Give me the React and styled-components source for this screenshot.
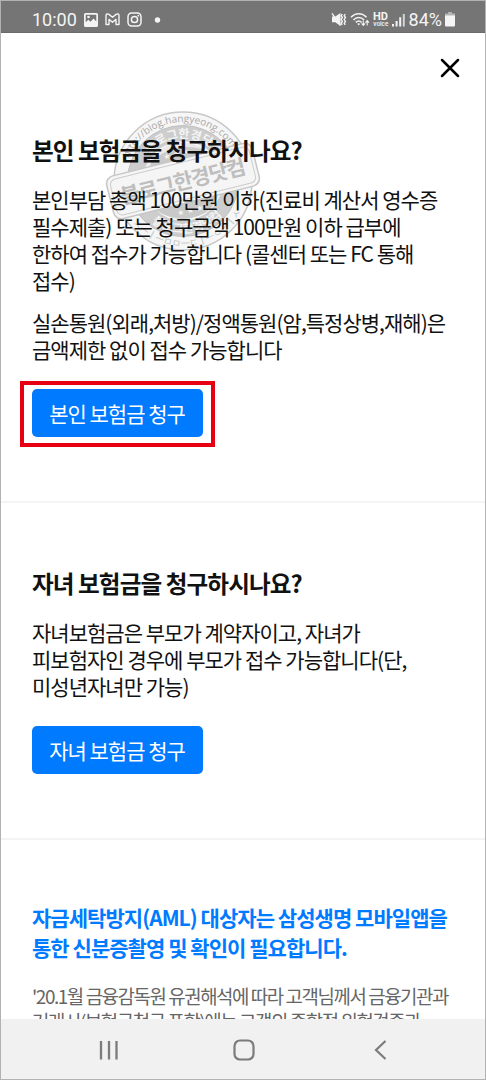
import React from 'react';
import styled, { createGlobalStyle } from 'styled-components';

const GlobalStyle = createGlobalStyle`
  * {
    box-sizing: border-box;
  }
  body {
    margin: 0;
    background: #fff;
  }
`;

const Phone = styled.div`
  position: relative;
  display: flex;
  flex-direction: column;
  width: 486px;
  height: 1080px;
  border: 1px solid #b2b2b2;
  background: #fff;
  overflow: hidden;
  color: #111;
  font-family: 'Noto Sans CJK KR', 'Noto Sans', sans-serif;
`;

const StatusBar = styled.header`
  display: flex;
  flex: none;
  align-items: center;
  justify-content: space-between;
  height: 32px;
  padding: 6px 30px 0 31px;
  background: #757575;
  border-bottom: 1px solid #6a6a6a;
  color: #f4f4f4;
`;

const StatusGroup = styled.div`
  display: flex;
  align-items: center;
  gap: ${(props) => props.gap}px;
`;

const StatusText = styled.span`
  font-family: Roboto, sans-serif;
  font-size: 18px;
  line-height: 22px;
`;

const Content = styled.main`
  position: relative;
  flex: 1;
  min-height: 0;
  overflow: hidden;
`;

const CloseRow = styled.div`
  display: flex;
  justify-content: flex-end;
  height: 37px;
  padding: 17px 17px 0 0;
`;

const CloseButton = styled.button`
  display: flex;
  width: 36px;
  height: 36px;
  padding: 8px;
  border: 0;
  background: none;
  color: #000;
`;

const Section = styled.section`
  position: relative;
  height: ${(props) => props.h};
  padding: 62px 20px 0 31px;
  border-bottom: ${(props) => (props.last ? 'none' : '2px solid #f4f4f4')};
`;

const Title = styled.h2`
  position: relative;
  margin: 0 0 18.4px;
  font-size: 23.6px;
  font-weight: 700;
  line-height: 36px;
  letter-spacing: -0.9px;
  white-space: nowrap;
`;

const Text = styled.p`
  position: relative;
  margin: 0 0 16px;
  font-size: 21px;
  line-height: 26.7px;
  letter-spacing: -0.98px;
  white-space: nowrap;
`;

const ClaimButton = styled.button`
  position: relative;
  display: block;
  width: 171px;
  height: 48px;
  margin-top: 26.6px;
  padding: 0 1px 0 0;
  border: 0;
  border-radius: 5px;
  background: #007aff;
  color: #fff;
  font-family: inherit;
  font-size: 21px;
  line-height: 46px;
  letter-spacing: -1px;
`;

const Highlight = styled.div`
  position: absolute;
  top: 311px;
  left: 19px;
  width: 195px;
  height: 66px;
  border: 4px solid #e60012;
`;

const NoticeTitle = styled.h3`
  margin: 1px 0 22px;
  color: #007aff;
  font-size: 21px;
  font-weight: 700;
  line-height: 29.4px;
  letter-spacing: -0.96px;
  white-space: nowrap;
`;

const NoticeText = styled.p`
  margin: 0;
  color: #666;
  font-size: 18.9px;
  line-height: 24.5px;
  letter-spacing: -1.42px;
  white-space: nowrap;
`;

const StampSvg = styled.svg`
  position: absolute;
  top: 35px;
  left: 99px;
  pointer-events: none;
`;

const NavBar = styled.nav`
  display: flex;
  flex: none;
  align-items: center;
  justify-content: space-between;
  height: 60px;
  padding: 2px 95px 0 96px;
  background: #f1f1f1;
`;

const PictureIcon = () => (
  <svg width="14" height="14" viewBox="0 0 14 14">
    <path
      fill="currentColor"
      fillRule="evenodd"
      d="M1.5 0h11A1.5 1.5 0 0 1 14 1.500v11a1.500 1.500 0 0 1-1.500 1.500h-11A1.500 1.500 0 0 1 0 12.500v-11A1.500 1.500 0 0 1 1.500 0zM1.700 1.700v7.600l2.600-2.600 2.200 2 3-3.200 2.800 3V1.700z"
    />
    <circle cx="4.500" cy="4" r="1.300" fill="currentColor" />
  </svg>
);

const MailIcon = () => (
  <svg width="15" height="13" viewBox="0 0 15 13" fill="none" stroke="currentColor" strokeWidth="1.4" strokeLinejoin="round">
    <path d="M1 11.500V2.600C1 .8 2.700.5 3.900 1.400l3.600 2.900 3.600-2.900C12.300.5 14 .8 14 2.600v8.900h-3V6.400L7.500 9.200 4 6.400v5.100z" />
  </svg>
);

const CameraIcon = () => (
  <svg width="15" height="15" viewBox="0 0 15 15" fill="none" stroke="currentColor" strokeWidth="1.5">
    <rect x="1" y="1" width="13" height="13" rx="3.700" />
    <circle cx="7.500" cy="7.500" r="3.100" />
    <circle cx="11.300" cy="3.700" r="0.9" fill="currentColor" stroke="none" />
  </svg>
);

const MuteIcon = () => (
  <svg width="16" height="15" viewBox="0 0 16 15" fill="none" stroke="currentColor">
    <path fill="currentColor" stroke="none" d="M1 4.500h3.300L9.500 1v13l-5.200-3.800H1z" />
    <path strokeWidth="1.4" d="M1 1.300l8.500 12" />
    <path strokeWidth="1.4" d="M11.200 2l-1 1.700 1.200 1.800-1.200 2 1.200 1.900-1.200 1.800 1 1.700M14.200 2l-1 1.700 1.200 1.800-1.200 2 1.200 1.900-1.200 1.800 1 1.700" />
  </svg>
);

const WifiIcon = () => (
  <svg width="20" height="15" viewBox="0 0 20 15" fill="none" stroke="currentColor" strokeWidth="1.5">
    <path d="M1 5.300c4.200-4.800 11.300-4.800 15.500 0M3.400 7.900c3-3.200 7.700-3.200 10.700 0M5.800 10.400c1.800-1.700 4-1.700 5.800 0" />
    <path fill="currentColor" stroke="none" d="M7.200 11.800c1-.8 2-.8 3 0L8.700 13.500z" />
    <path strokeWidth="1.1" d="M13.300 8.500v4.700m-1.800-1.800 1.800 2 1.800-2M17.200 13.500V8.800m-1.800 1.800 1.800-2 1.800 2" />
  </svg>
);

const HdVoiceIcon = () => (
  <svg width="16" height="15" viewBox="0 0 16 15" fill="currentColor" fontFamily="Roboto, sans-serif" fontWeight="700" overflow="visible">
    <text x="0" y="8" fontSize="10.500" textLength="15" lengthAdjust="spacingAndGlyphs">HD</text>
    <text x="0.300" y="13.500" fontSize="6.500" fontWeight="500" textLength="15" lengthAdjust="spacingAndGlyphs">voice</text>
  </svg>
);

const SignalIcon = () => (
  <svg width="14" height="14" viewBox="0 0 14 14" fill="currentColor">
    <path d="M0 11h2v2.500H0zM3.600 8h2v5.500h-2zM7.200 4.300h2v9.200h-2z" />
    <path d="M10.800 1h2v12.500h-2z" opacity="0.75" />
  </svg>
);

const BatteryIcon = () => (
  <svg width="10" height="15" viewBox="0 0 10 15" fill="currentColor">
    <path opacity="0.5" d="M3 0h4v1.500H10V4H0V1.500h3z" />
    <path d="M0 3.500h10v10a1 1 0 0 1-1 1H1a1 1 0 0 1-1-1z" />
  </svg>
);

// round blog stamp, sits behind the copy
const Stamp = () => (
  <StampSvg width="166" height="152" viewBox="-83 -76 166 152">
    <defs>
      <path id="rimTop" d="M-59 0A59 59 0 0 1 59 0" />
      <path id="rimBottom" d="M-66 0A66 66 0 0 0 66 0" />
      <path id="bandTop" d="M-43 0A43 43 0 0 1 43 0" />
      <path id="bandBottom" d="M-52 0A52 52 0 0 0 52 0" />
    </defs>
    <circle r="69" fill="#f6f6f6" stroke="#c8c8c8" strokeWidth="1.5" />
    <circle r="55.500" fill="#cdcdcd" stroke="#c0c0c0" />
    <circle r="39" fill="#e9e9e9" stroke="#f8f8f8" strokeWidth="1.5" />
    <path d="M-32-20Q0-44 30-27L36-14-34 4zM-36 18 36 2Q37 35 0 38-27 36-36 18z" fill="#c9c9c9" />
    <g transform="rotate(-6)" fontFamily="'Noto Sans CJK KR', sans-serif" textAnchor="middle">
      <text fontSize="10" fill="#a8a8a8" fontFamily="'Open Sans', sans-serif">
        <textPath href="#rimTop" startOffset="50%">http://blog.hangyeong.com</textPath>
      </text>
      <text fontSize="12" fontWeight="700" fill="#f4f4f4">
        <textPath href="#bandTop" startOffset="54%">블로그한경닷컴</textPath>
      </text>
      <text fontSize="12" fontWeight="700" fill="#f4f4f4">
        <textPath href="#bandBottom" startOffset="50%">블로그한경닷컴</textPath>
      </text>
      <text fontSize="10" fill="#c0c0c0">
        <textPath href="#rimBottom" startOffset="50%">ㅅㅡㅣㅡㅁㅁㅡㄷㅣㅡㅇㅡㅣㅅ</textPath>
      </text>
    </g>
    <g transform="rotate(-14)">
      <text y="-25" fontSize="8" fill="#f2f2f2" textAnchor="middle" fontFamily="'DejaVu Sans', sans-serif">★ ★ ★</text>
      <text y="33" fontSize="8" fill="#f2f2f2" textAnchor="middle" fontFamily="'DejaVu Sans', sans-serif">★ ★ ★</text>
      <rect x="-75" y="-22" width="150" height="44" rx="8" fill="#f5f5f5" stroke="#c6c6c6" strokeWidth="1.5" />
      <rect x="-71.500" y="-18.500" width="143" height="37" rx="6" fill="#f5f5f5" stroke="#cdcdcd" />
      <text y="8" fontSize="21" fontWeight="700" fill="#bebebe" textAnchor="middle" textLength="128" fontFamily="'Noto Sans CJK KR', sans-serif">
        블로그한경닷컴
      </text>
    </g>
  </StampSvg>
);

const App = () => {
  return (
    <Phone>
      <GlobalStyle />
      <StatusBar>
        <StatusGroup gap={7}>
          <StatusText>10:00</StatusText>
          <PictureIcon />
          <MailIcon />
          <CameraIcon />
          <svg width="22" height="6" viewBox="0 0 22 6">
            <circle cx="8.500" cy="3" r="2.700" fill="currentColor" />
          </svg>
        </StatusGroup>
        <StatusGroup gap={3}>
          <MuteIcon />
          <WifiIcon />
          <HdVoiceIcon />
          <SignalIcon />
          <StatusText>84%</StatusText>
          <BatteryIcon />
        </StatusGroup>
      </StatusBar>
      <Content>
        <CloseRow>
          <CloseButton aria-label="닫기">
            <svg width="20" height="20" viewBox="0 0 20 20" fill="none" stroke="currentColor" strokeWidth="2.5" strokeLinecap="round">
              <path d="M2 2l16 16M18 2 2 18" />
            </svg>
          </CloseButton>
        </CloseRow>
        <Section h="433px">
          <Stamp />
          <Title>본인 보험금을 청구하시나요?</Title>
          <Text>
            본인부담 총액 100만원 이하(진료비 계산서 영수증
            <br />
            필수제출) 또는 청구금액 100만원 이하 급부에
            <br />
            한하여 접수가 가능합니다 (콜센터 또는 FC 통해
            <br />
            접수)
          </Text>
          <Text>
            실손통원(외래,처방)/정액통원(암,특정상병,재해)은
            <br />
            금액제한 없이 접수 가능합니다
          </Text>
          <ClaimButton>본인 보험금 청구</ClaimButton>
          <Highlight />
        </Section>
        <Section h="337.4px">
          <Title>자녀 보험금을 청구하시나요?</Title>
          <Text>
            자녀보험금은 부모가 계약자이고, 자녀가
            <br />
            피보험자인 경우에 부모가 접수 가능합니다(단,
            <br />
            미성년자녀만 가능)
          </Text>
          <ClaimButton>자녀 보험금 청구</ClaimButton>
        </Section>
        <Section h="180px" last>
          <NoticeTitle>
            자금세탁방지(AML) 대상자는 삼성생명 모바일앱을
            <br />
            통한 신분증촬영 및 확인이 필요합니다.
          </NoticeTitle>
          <NoticeText>
            '20.1월 금융감독원 유권해석에 따라 고객님께서 금융기관과
            <br />
            거래시(보험금청구 포함)에는 고객의 종합적 위험검증과
          </NoticeText>
        </Section>
      </Content>
      <NavBar>
        <svg width="24" height="24" viewBox="0 0 24 24" fill="none" stroke="#7b7b7b" strokeWidth="2.3">
          <path d="M4 3v18.500M12 3v18.500M19.500 3v18.500" />
        </svg>
        <svg width="24" height="24" viewBox="0 0 24 24" fill="none" stroke="#7b7b7b" strokeWidth="2.2">
          <rect x="2.500" y="2.500" width="19" height="19" rx="5.500" />
        </svg>
        <svg width="24" height="24" viewBox="0 0 24 24" fill="none" stroke="#7b7b7b" strokeWidth="2.2">
          <path d="M19.500 3l-9.500 9 9.500 9" />
        </svg>
      </NavBar>
    </Phone>
  );
};

export default App;
